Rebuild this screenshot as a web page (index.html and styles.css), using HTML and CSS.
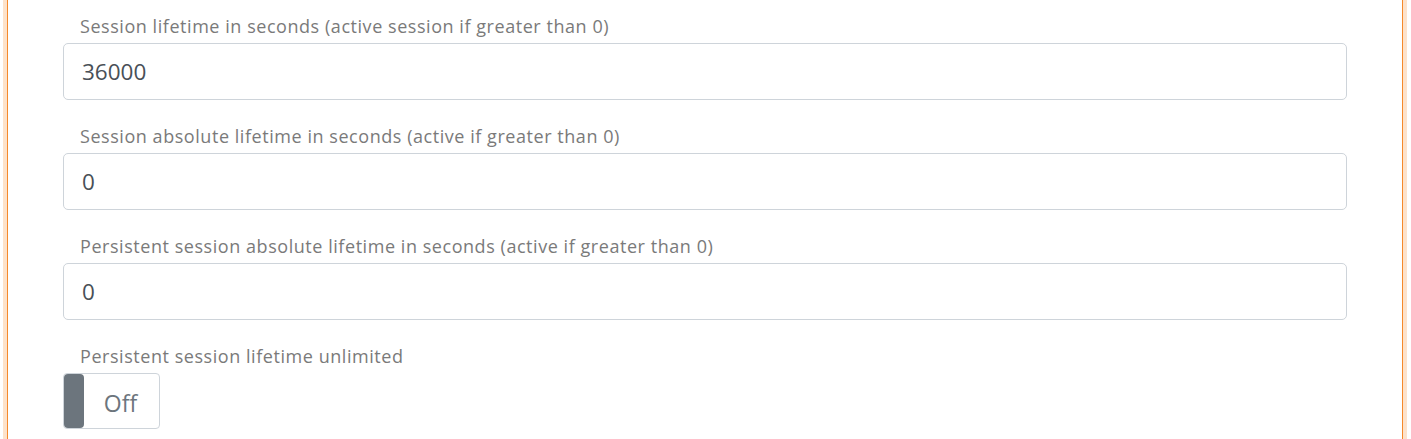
FILE: index.html
```html
<!DOCTYPE html>
<html>
<head>
<meta charset="utf-8">
<link rel="stylesheet" href="styles.css">
</head>
<body>
<div class="panel">
  <div class="group">
    <label class="lbl">Session lifetime in seconds (active session if greater than 0)</label>
    <div class="field">36000</div>
  </div>
  <div class="group">
    <label class="lbl">Session absolute lifetime in seconds (active if greater than 0)</label>
    <div class="field">0</div>
  </div>
  <div class="group">
    <label class="lbl">Persistent session absolute lifetime in seconds (active if greater than 0)</label>
    <div class="field">0</div>
  </div>
  <div class="group">
    <label class="lbl">Persistent session lifetime unlimited</label>
    <div class="toggle"><span class="knob"></span><span class="toggle-text">Off</span></div>
  </div>
</div>
</body>
</html>
```
FILE: styles.css
```css
html, body {
  margin: 0;
  padding: 0;
  background: #fff;
  overflow: hidden;
}
body {
  font-family: "Open Sans", "Noto Sans", sans-serif;
}
.panel {
  box-sizing: border-box;
  margin: -20px 0 0 7px;
  width: 1396px;
  height: 600px;
  border: 1px solid #f5892a;
  box-shadow: 0 0 0 4px #fde2ca;
  padding: 32px 55px 0 55px;
}
.group {
  display: flex;
  flex-direction: column;
  margin-bottom: 23px;
}
.lbl {
  font-size: 18px;
  line-height: 24px;
  color: #7a7a7a;
  padding-left: 17px;
  padding-top: 1px;
  margin-bottom: 5px;
  letter-spacing: 0.55px;
}
.field {
  box-sizing: border-box;
  height: 57px;
  border: 1px solid #ced4da;
  border-radius: 5px;
  padding: 0 18px;
  display: flex;
  align-items: center;
  font-size: 22.5px;
  color: #495057;
}
.toggle {
  box-sizing: border-box;
  width: 97px;
  height: 56px;
  border: 1px solid #ced4da;
  border-radius: 4px;
  display: flex;
  align-items: stretch;
  padding: 0;
}
.knob {
  width: 20px;
  background: #6c757d;
  border-radius: 4px;
  margin: 0;
}
.toggle-text {
  flex: 1;
  display: flex;
  align-items: center;
  justify-content: center;
  font-size: 23px;
  color: #6c757d;
  padding-right: 2px;
  padding-top: 3px;
}
```
